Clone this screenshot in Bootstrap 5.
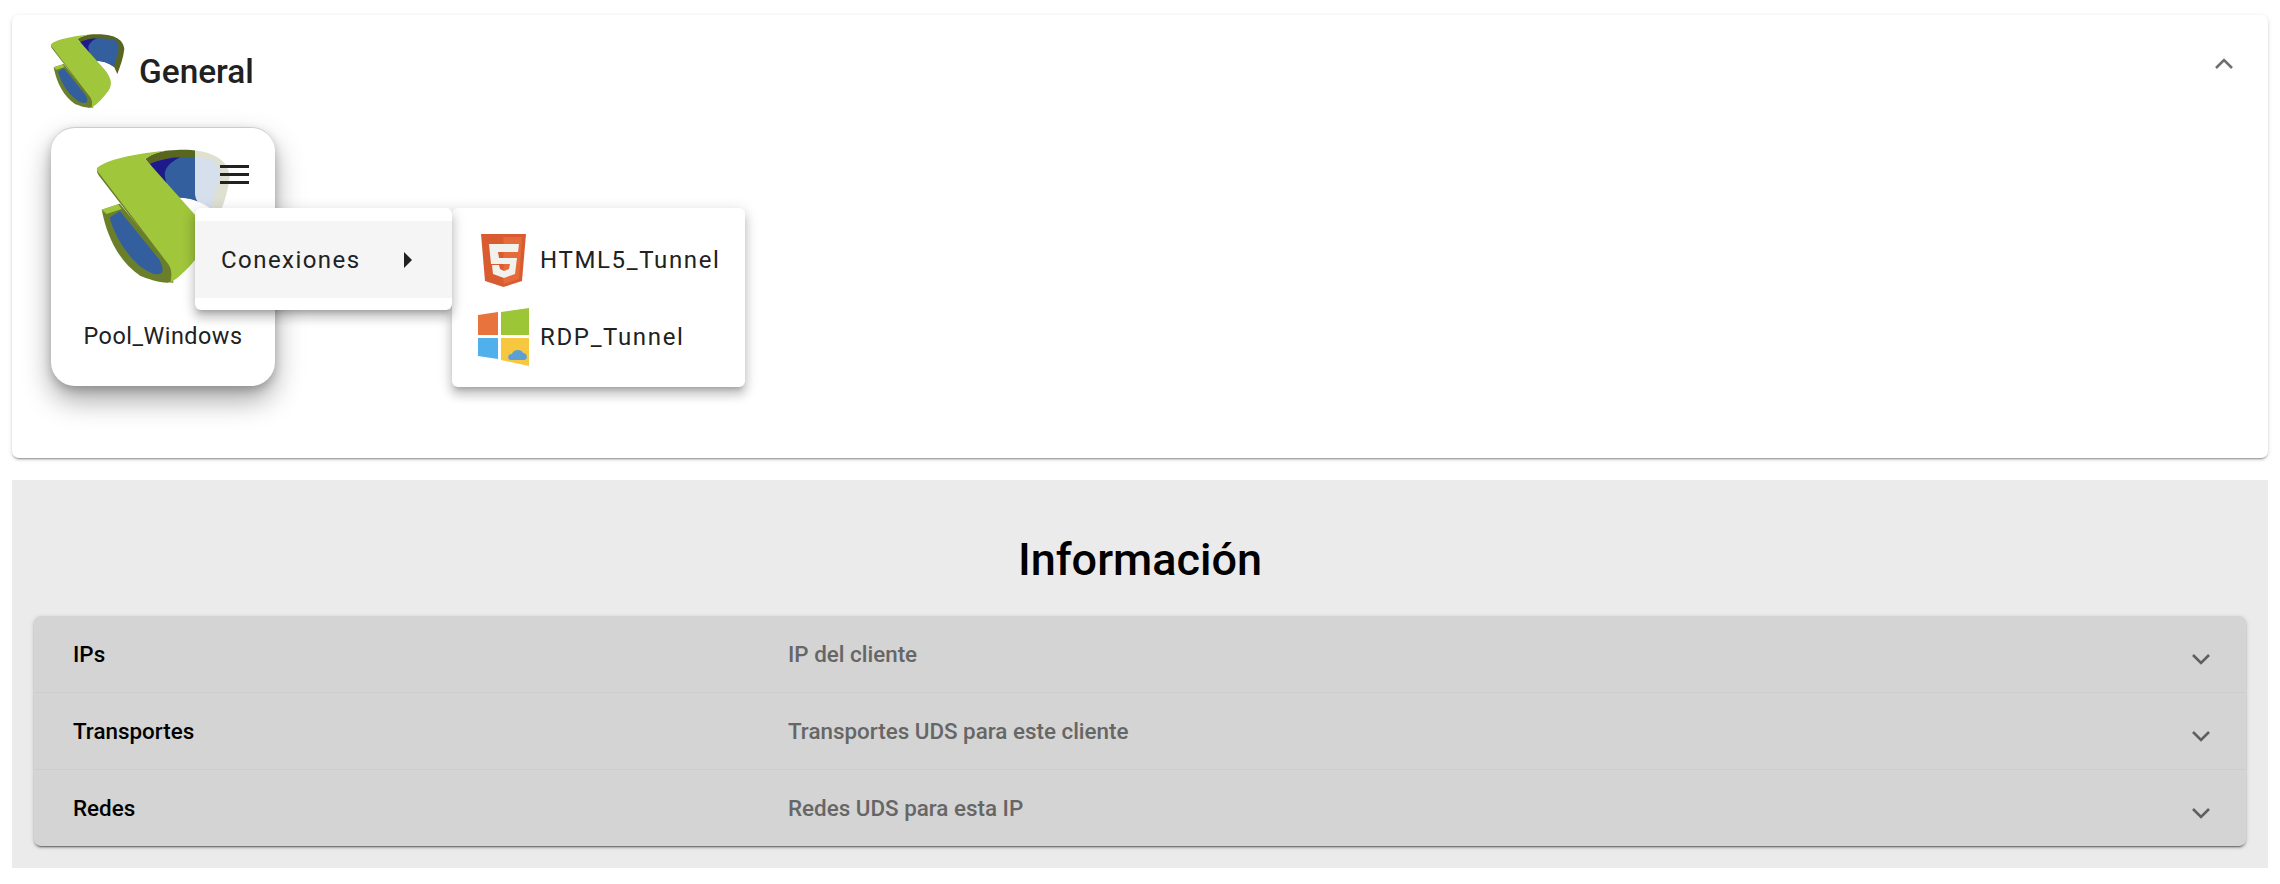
<!DOCTYPE html>
<html lang="es">
<head>
<meta charset="UTF-8">
<title>UDS</title>
<link href="https://cdn.jsdelivr.net/npm/bootstrap@5.3.0/dist/css/bootstrap.min.css" rel="stylesheet">
<script src="https://cdn.jsdelivr.net/npm/bootstrap@5.3.0/dist/js/bootstrap.bundle.min.js"></script>
<style>
body { background: #fff; font-family: Roboto, "Liberation Sans", sans-serif; color: #212121; padding: 15px 12px 16px; }
.panel-top { height: 443px; border-radius: 7px; background: #fff; box-shadow: 0 3px 1px -2px rgba(0,0,0,.2), 0 2px 2px 0 rgba(0,0,0,.14), 0 1px 5px 0 rgba(0,0,0,.12); padding: 10px 28px 0; position: relative; }
.panel-head { height: 90px; }
.panel-head h2 { font-size: 33.4px; font-weight: 500; margin: 0 0 0 9px; padding-top: 4px; color: #212121; }
.head-logo { width: 90px; height: 90px; flex: none; }
.chev-up { position: absolute; right: 34px; top: 42px; }
.pool-card { width: 224px; height: 259px; margin: 12px 0 0 11px; border-radius: 24px; background: #fff; border-top: 1px solid #ccc; box-shadow: 0 14px 28px rgba(0,0,0,.35), 0 4px 10px rgba(0,0,0,.2); position: relative; }
.pool-logo { position: absolute; left: 26px; top: 5px; width: 163px; height: 163px; }
.menu-btn { position: absolute; left: 144px; top: 0; width: 80px; height: 81px; background: rgba(255,255,255,.8); border-radius: 0 24px 0 16px; }
.bars { position: absolute; left: 25px; top: 37px; width: 29px; height: 19px; border-top: 3px solid #212121; border-bottom: 3px solid #212121; }
.bars::after { content: ""; display: block; height: 3px; margin-top: 5px; background: #212121; }
.pool-name { position: absolute; left: 0; right: 0; top: 194px; text-align: center; font-size: 23.4px; letter-spacing: .5px; line-height: 28px; }
.pop { position: absolute; background: #fff; border-radius: 6px; box-shadow: 0 5px 5px -3px rgba(0,0,0,.2), 0 8px 10px 1px rgba(0,0,0,.14), 0 3px 14px 2px rgba(0,0,0,.12); }
.pop-one { left: 195px; top: 208px; width: 257px; height: 102px; padding-top: 13px; }
.pop-two { left: 452px; top: 208px; width: 293px; height: 179px; padding-top: 13px; }
.pop-row { height: 77px; font-size: 24px; letter-spacing: 1.65px; padding-left: 26px; }
.pop-one .pop-row { background: #f5f5f5; padding-right: 40px; letter-spacing: 1.45px; }
.caret-r { width: 0; height: 0; border-left: 8px solid #212121; border-top: 8px solid transparent; border-bottom: 8px solid transparent; }
.trans-icon { width: 52px; height: 58px; margin-right: 10px; flex: none; }
.info-panel { height: 388px; margin-top: 22px; background: #ebebeb; padding: 0 22px; }
.info-panel h1 { font-size: 45px; font-weight: 500; color: #000; text-align: center; margin: 0; height: 136px; line-height: 160px; }
.acc { border-radius: 7px; background: #d4d4d4; box-shadow: 0 3px 1px -2px rgba(0,0,0,.35), 0 2px 2px 0 rgba(0,0,0,.2), 0 1px 5px 0 rgba(0,0,0,.14); }
.acc-row { height: 77px; padding: 2px 35px 0 39px; font-size: 22.4px; font-weight: 500; color: #000; background: transparent; border: 0; border-bottom: 1px solid #cdcdcd; }
.acc-row:last-child { border-bottom: 0; height: 76px; }
.acc-title { width: 715px; flex: none; }
.acc-desc { flex: 1; color: #666; }
.acc-row svg { margin-top: 8px; }
</style>
</head>
<body>

<svg width="0" height="0" class="d-block">
  <symbol id="uds" viewBox="0 0 270 270">
    <path d="M113 43 C125 33 145 28 165 28 C205 26 250 35 253 72 C250 100 240 125 232 147 L222 125 C205 112 185 106 166 107 Z" fill="#59661f"/>
    <path d="M121 51 C150 38 200 36 225 46 C236 52 237 66 234 82 L222 126 C205 113 185 107 166 107 Z" fill="#345f9f"/>
    <path d="M121 51 C135 45 155 40 171 40 C150 50 143 62 146 74 C148 85 152 95 160 104 L140 90 Z" fill="#1e1a8c"/>
    <path d="M41 127 L71 117 L152 216 C160 230 162 245 150 248 C135 248 115 241 104 236 C72 215 50 175 41 127 Z" fill="#6b7f2a"/>
    <path d="M54 140 L71 129 L135 208 C143 220 143 230 140 232 C135 235 130 234 126 233 C95 222 65 180 54 140 Z" fill="#345f9f"/>
    <path d="M41 127 L68 118 L74 126 L49 134 Z" fill="#a0c63c"/>
    <path d="M33 60 C33 66 35 69 38 73 L140 205 C146 214 148 232 146 247 L160 248 L150 215 L38 62 Z" fill="#6b7f2a"/>
    <path d="M33 58 C50 42 110 32 160 28 C145 29 125 33 113 43 L195 135 C215 160 218 180 205 198 C190 218 175 235 155 248 C157 234 157 225 151 217 L36 66 C33 62 33 60 33 58 Z" fill="#a0c63c"/>
  </symbol>
</svg>

<div class="panel-top">
  <div class="panel-head d-flex align-items-center">
    <svg class="head-logo"><use href="#uds"/></svg>
    <h2>General</h2>
  </div>
  <svg class="chev-up" width="20" height="14" viewBox="0 0 20 14"><path d="M2 11 L10 3 L18 11" fill="none" stroke="#6f6f6f" stroke-width="2.6"/></svg>

  <div class="pool-card">
    <svg class="pool-logo"><use href="#uds"/></svg>
    <div class="menu-btn"><div class="bars"></div></div>
    <div class="pool-name">Pool_Windows</div>
  </div>
</div>

<div class="pop pop-two">
  <div class="pop-row d-flex align-items-center">
    <svg class="trans-icon" viewBox="0 0 52 58"><path d="M3 3 H48 L44 50 L25.500 56 L7 50 Z" fill="#d95c31"/><path d="M25.500 6 H44 L41 48 L25.500 53 Z" fill="#e66b3a"/><path d="M11 13 H41 L40 21 H20 L21 27 H39 L37 43 L26 47 L15 43 L14 34 H21 L22 38 L26 40 L31 38 L32 33 H13 Z" fill="#f1f1ee"/></svg>
    <span>HTML5_Tunnel</span>
  </div>
  <div class="pop-row d-flex align-items-center">
    <svg class="trans-icon" viewBox="0 0 52 58"><path d="M0 7 L20 4 V27 H0 Z" fill="#e8733c"/><path d="M23 4 L51 0 V27 H23 Z" fill="#9cc636"/><path d="M0 30 H20 V51 L0 48 Z" fill="#4fb0ec"/><path d="M23 30 H51 V58 L23 52 Z" fill="#f8c740"/><path d="M33 52 C29 52 29 46 34 46 C35 41 44 41 45 45 C50 45 50 52 46 52 Z" fill="#5b9fd6"/></svg>
    <span>RDP_Tunnel</span>
  </div>
</div>
<div class="pop pop-one">
  <div class="pop-row d-flex align-items-center justify-content-between">
    <span>Conexiones</span>
    <span class="caret-r"></span>
  </div>
</div>

<div class="info-panel">
  <h1>Información</h1>
  <div class="acc list-group list-group-flush">
    <div class="acc-row list-group-item d-flex align-items-center">
      <div class="acc-title">IPs</div><div class="acc-desc">IP del cliente</div>
      <svg width="20" height="14" viewBox="0 0 20 14"><path d="M2 3 L10 11 L18 3" fill="none" stroke="#5f5f5f" stroke-width="2.6"/></svg>
    </div>
    <div class="acc-row list-group-item d-flex align-items-center">
      <div class="acc-title">Transportes</div><div class="acc-desc">Transportes UDS para este cliente</div>
      <svg width="20" height="14" viewBox="0 0 20 14"><path d="M2 3 L10 11 L18 3" fill="none" stroke="#5f5f5f" stroke-width="2.6"/></svg>
    </div>
    <div class="acc-row list-group-item d-flex align-items-center">
      <div class="acc-title">Redes</div><div class="acc-desc">Redes UDS para esta IP</div>
      <svg width="20" height="14" viewBox="0 0 20 14"><path d="M2 3 L10 11 L18 3" fill="none" stroke="#5f5f5f" stroke-width="2.6"/></svg>
    </div>
  </div>
</div>

</body>
</html>
